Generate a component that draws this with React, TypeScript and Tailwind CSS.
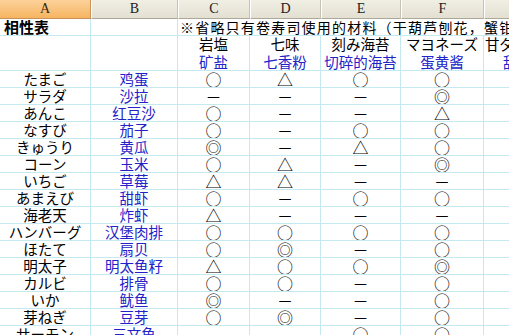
const rows: [string, string, string, string, string, string][] = [
  ["たまご", "鸡蛋", "○", "△", "○", "○"],
  ["サラダ", "沙拉", "－", "－", "－", "◎"],
  ["あんこ", "红豆沙", "○", "－", "－", "△"],
  ["なすび", "茄子", "○", "－", "○", "○"],
  ["きゅうり", "黄瓜", "◎", "－", "△", "○"],
  ["コーン", "玉米", "○", "△", "－", "◎"],
  ["いちご", "草莓", "△", "△", "－", "－"],
  ["あまえび", "甜虾", "○", "－", "○", "○"],
  ["海老天", "炸虾", "△", "－", "－", "－"],
  ["ハンバーグ", "汉堡肉排", "○", "○", "○", "○"],
  ["ほたて", "扇贝", "○", "◎", "－", "○"],
  ["明太子", "明太鱼籽", "△", "○", "○", "◎"],
  ["カルビ", "排骨", "○", "○", "－", "○"],
  ["いか", "鱿鱼", "◎", "－", "－", "○"],
  ["芽ねぎ", "豆芽", "○", "◎", "－", "○"],
  ["サーモン", "三文鱼", "－", "－", "○", "○"],
];

const toppings: [string, string][] = [
  ["岩塩", "矿盐"],
  ["七味", "七香粉"],
  ["刻み海苔", "切碎的海苔"],
  ["マヨネーズ", "蛋黄酱"],
];

const cell = "border-r border-b border-[#c4e9f1] flex items-center justify-center overflow-hidden whitespace-nowrap";
const mark = `${cell} h-[17px] text-[16px] leading-[16px]`;

function Header({ label, active }: { label: string; active?: boolean }) {
  return (
    <div
      className={
        active
          ? "h-[19px] flex items-center justify-center border-r border-b border-[#c9925a] bg-gradient-to-b from-[#fcd29a] to-[#f6b45f] text-[14px] text-[#3a2a10]"
          : "h-[19px] flex items-center justify-center border-r border-b border-r-[#c7c3b4] border-b-[#aca899] border-l border-l-white bg-gradient-to-b from-[#f1efe4] to-[#e3e0d2] text-[14px] text-[#222]"
      }
      style={{ fontFamily: '"Liberation Serif", "DejaVu Serif", serif' }}
    >
      {label}
    </div>
  );
}

export default function App() {
  return (
    <div
      className="w-[509px] h-[335px] overflow-hidden bg-white text-black"
      style={{ fontFamily: '"Noto Sans CJK JP", "Noto Sans CJK SC", sans-serif' }}
    >
      <div className="grid grid-cols-[91px_87px_72px_71px_80px_83px_80px] w-[564px] text-[14.5px] leading-[16px]">
        <Header label="A" active />
        <Header label="B" />
        <Header label="C" />
        <Header label="D" />
        <Header label="E" />
        <Header label="F" />
        <Header label="G" />

        {/* row 1: title + note overflowing to the right */}
        <div className={`${cell} h-[17px] justify-start pl-[4px] font-bold text-[15px]`}>相性表</div>
        <div className={`${cell} h-[17px]`} />
        <div className="col-span-5 h-[17px] border-b border-[#c4e9f1] flex items-center pl-[2px] whitespace-nowrap overflow-hidden text-[14px] tracking-[1.2px]">
          ※省略只有卷寿司使用的材料（干葫芦刨花，蟹钳，黄瓜）
        </div>

        {/* row 2: topping names */}
        <div className={`${cell} h-[35px]`} />
        <div className={`${cell} h-[35px]`} />
        {toppings.map(([jp, cn]) => (
          <div key={jp} className={`${cell} h-[35px] flex-col gap-[2px]`}>
            <span>{jp}</span>
            <span className="text-[#2222c8]">{cn}</span>
          </div>
        ))}
        <div className={`${cell} h-[35px] flex-col items-start gap-[2px]`}>
          <span className="pl-[1px]">甘ダレ</span>
          <span className="pl-[19px] text-[#2222c8]">甜酱汁</span>
        </div>

        {rows.map((r) => (
          <div key={r[0]} className="contents">
            <div className={`${cell} h-[17px]`}>{r[0]}</div>
            <div className={`${cell} h-[17px] text-[#2222c8]`}>{r[1]}</div>
            <div className={mark}>{r[2]}</div>
            <div className={mark}>{r[3]}</div>
            <div className={mark}>{r[4]}</div>
            <div className={mark}>{r[5]}</div>
            <div className={`${cell} h-[17px]`} />
          </div>
        ))}
      </div>
    </div>
  );
}
